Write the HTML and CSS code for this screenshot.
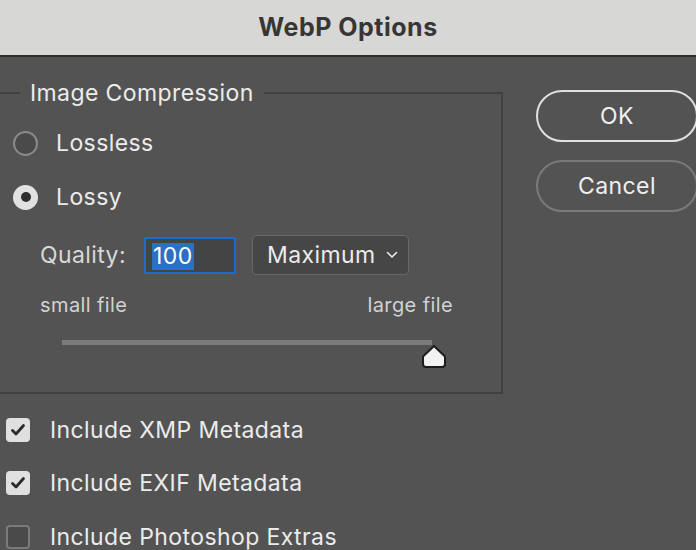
FILE: index.html
```html
<!DOCTYPE html>
<html lang="en">
<head>
    <meta charset="UTF-8">
    <meta name="viewport" content="width=device-width, initial-scale=1.0">
    <title>WebP Options</title>
    <link rel="stylesheet" href="styles.css">
</head>
<body>
    <div class="titlebar">WebP Options</div>

    <div class="dialog">
        <div class="left">
            <fieldset class="group">
                <legend>Image Compression</legend>
                <label class="radio-row"><span class="radio"></span>Lossless</label>
                <label class="radio-row"><span class="radio checked"></span>Lossy</label>

                <div class="quality-row">
                    <span class="quality-label">Quality:</span>
                    <div class="quality-input"><span class="selected">100</span></div>
                    <div class="select">
                        <span>Maximum</span>
                        <svg width="12" height="8" viewBox="0 0 12 8"><path d="M1.5 1.5 L6 6 L10.5 1.5" fill="none" stroke="#e6e6e6" stroke-width="1.6" stroke-linecap="round" stroke-linejoin="round"/></svg>
                    </div>
                </div>

                <div class="scale-labels">
                    <span>small file</span>
                    <span>large file</span>
                </div>

                <div class="slider">
                    <div class="track"></div>
                    <svg class="thumb" width="26" height="25" viewBox="0 0 26 25">
                        <path d="M13 2 L23.5 12 Q24 12.5 24 13.5 L24 20 Q24 23 21 23 L5 23 Q2 23 2 20 L2 13.5 Q2 12.5 2.5 12 Z" fill="#f2f2f2" stroke="#1b1b1b" stroke-width="2" stroke-linejoin="round"/>
                    </svg>
                </div>
            </fieldset>

            <label class="check-row"><span class="checkbox checked"><svg width="16" height="14" viewBox="0 0 16 14"><path d="M2.5 7.5 L6 11 L13.5 2.5" fill="none" stroke="#2b2b2b" stroke-width="2.8" stroke-linecap="round" stroke-linejoin="round"/></svg></span>Include XMP Metadata</label>
            <label class="check-row"><span class="checkbox checked"><svg width="16" height="14" viewBox="0 0 16 14"><path d="M2.5 7.5 L6 11 L13.5 2.5" fill="none" stroke="#2b2b2b" stroke-width="2.8" stroke-linecap="round" stroke-linejoin="round"/></svg></span>Include EXIF Metadata</label>
            <label class="check-row"><span class="checkbox"></span>Include Photoshop Extras</label>
        </div>

        <div class="buttons">
            <button class="btn primary">OK</button>
            <button class="btn">Cancel</button>
        </div>
    </div>
</body>
</html>
```

FILE: styles.css
```css
html, body {
    margin: 0;
    height: 100%;
    overflow: hidden;
}
body {
    font-family: Inter, "Noto Sans", sans-serif;
    background-color: #535353;
    color: #ebebeb;
    font-size: 23px;
    letter-spacing: 0.4px;
}

.titlebar {
    height: 55px;
    line-height: 55px;
    background-color: #d7d7d6;
    border-bottom: 2px solid #2e2e2e;
    text-align: center;
    font-size: 25px;
    font-weight: 700;
    letter-spacing: 0.5px;
    color: #363636;
}

.dialog {
    display: flex;
    gap: 33px;
    padding-top: 23px;
}

.left {
    display: flex;
    flex-direction: column;
}

.group {
    margin: 0 0 0 -20px;
    width: 523px;
    box-sizing: border-box;
    border: 2px solid #404040;
    padding: 10px 0 12px 31px;
}
.group legend {
    margin-left: 7px;
    padding: 0 10px;
    line-height: 26px;
    color: #ececec;
}

.radio-row {
    display: flex;
    align-items: center;
    gap: 18px;
    height: 54px;
}
.radio {
    width: 25px;
    height: 25px;
    box-sizing: border-box;
    border-radius: 50%;
    border: 2px solid #8a8a8a;
    background-color: #4a4a4a;
}
.radio.checked {
    border: none;
    background-color: #e2e2e2;
    display: flex;
    align-items: center;
    justify-content: center;
}
.radio.checked::after {
    content: "";
    width: 10px;
    height: 10px;
    border-radius: 50%;
    background-color: #2e2e2e;
}

.quality-row {
    display: flex;
    align-items: center;
    height: 40px;
    margin-top: 11px;
    padding-left: 27px;
}
.quality-label {
    color: #d8d8d8;
    width: 104px;
}
.quality-input {
    width: 92px;
    height: 37px;
    box-sizing: border-box;
    border: 2px solid #1e6bd0;
    background-color: #444444;
    padding: 2px 0 0 6px;
    display: flex;
    align-items: center;
}
.quality-input .selected {
    background-color: #2d6fc2;
    color: #ffffff;
    line-height: 27px;
    padding: 0 1px;
}
.select {
    margin-left: 16px;
    width: 157px;
    height: 40px;
    box-sizing: border-box;
    border: 1.5px solid #686868;
    border-radius: 5px;
    background-color: #464646;
    display: flex;
    align-items: center;
    justify-content: space-between;
    padding: 0 10px 0 14px;
}

.scale-labels {
    display: flex;
    justify-content: space-between;
    width: 413px;
    margin-top: 17px;
    padding-left: 27px;
    line-height: 26px;
    font-size: 20px;
    color: #d2d2d2;
}

.slider {
    position: relative;
    height: 40px;
    margin-top: 22px;
    margin-left: 49px;
}
.track {
    width: 370px;
    height: 5px;
    background-color: #7b7b7b;
}
.thumb {
    position: absolute;
    left: 359px;
    top: 4px;
}

.check-row {
    display: flex;
    align-items: center;
    gap: 20px;
    height: 53.5px;
    padding-left: 6px;
}
.check-row:first-of-type {
    margin-top: 9px;
}
.checkbox {
    width: 24px;
    height: 24px;
    box-sizing: border-box;
    border-radius: 4px;
    border: 2px solid #7a7a7a;
    background-color: #4a4a4a;
    display: flex;
    align-items: center;
    justify-content: center;
}
.checkbox.checked {
    border: none;
    background-color: #e0e0e0;
}

.buttons {
    display: flex;
    flex-direction: column;
    gap: 18px;
    padding-top: 10px;
}
.btn {
    width: 162px;
    height: 52px;
    border-radius: 26px;
    background-color: transparent;
    border: 2px solid #7a7a7a;
    color: #efefef;
    font-family: Inter, "Noto Sans", sans-serif;
    font-size: 23px;
    letter-spacing: 0.4px;
    cursor: pointer;
}
.btn.primary {
    border-color: #e0e0e0;
}
```
